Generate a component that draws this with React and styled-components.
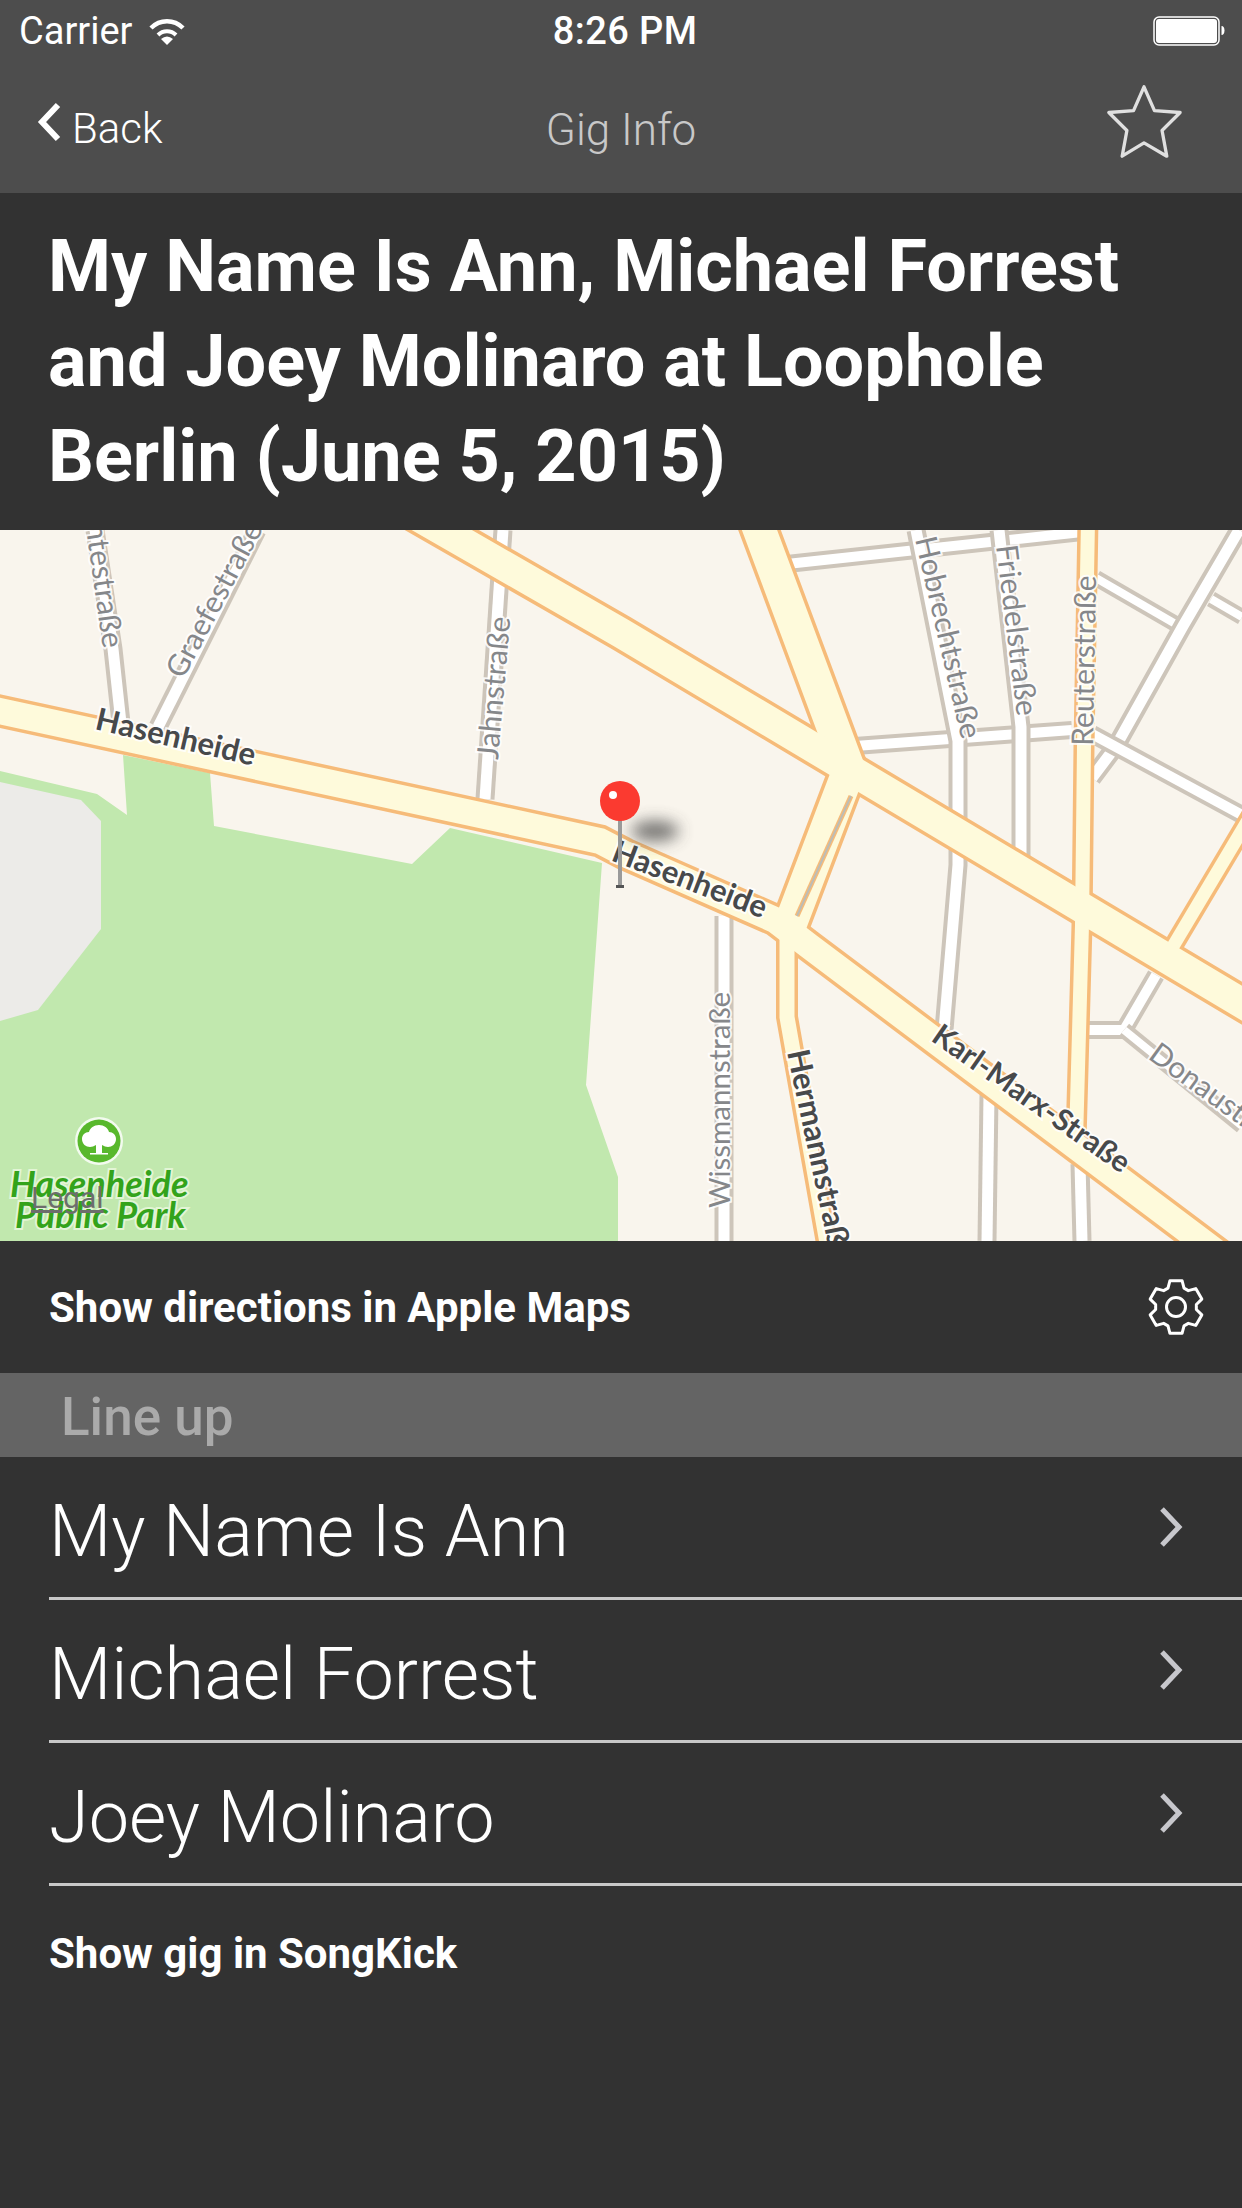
import React from "react";
import styled, { createGlobalStyle } from "styled-components";

const GlobalStyle = createGlobalStyle`
  html, body {
    margin: 0;
    padding: 0;
    background: #323232;
  }
  * {
    box-sizing: border-box;
  }
`;

const Page = styled.div`
  width: 1242px;
  height: 2208px;
  overflow: hidden;
  background: #323232;
  color: #fff;
  font-family: Roboto, "Liberation Sans", sans-serif;
`;

const TopBars = styled.header`
  height: 193px;
  background: #4d4d4d;
`;

const StatusBar = styled.div`
  height: 60px;
  padding: 2px 17px 0 19px;
  display: grid;
  grid-template-columns: 1fr auto 1fr;
  align-items: center;
  font-size: 38px;
`;

const StatusLeft = styled.div`
  display: flex;
  align-items: center;
  gap: 16px;
`;

const Clock = styled.div`
  font-weight: 500;
  letter-spacing: 0.4px;
  margin-left: 6px;
`;

const Battery = styled.div`
  justify-self: end;
  display: flex;
`;

const NavBar = styled.nav`
  height: 133px;
  padding: 0 60px 9px 37px;
  display: grid;
  grid-template-columns: 1fr auto 1fr;
  align-items: center;
`;

const BackLink = styled.div`
  display: flex;
  align-items: center;
  gap: 10px;
  font-size: 42px;
  font-weight: 300;
`;

const BackText = styled.span`
  padding-top: 12px;
`;

const NavTitle = styled.div`
  padding-top: 16px;
  margin-left: 23px;
  font-size: 44px;
  font-weight: 300;
  color: #c8c8c8;
`;

const StarButton = styled.div`
  justify-self: end;
  display: flex;
`;

const GigTitle = styled.h1`
  height: 337px;
  margin: 0;
  padding: 26px 40px 0 48px;
  font-size: 72px;
  line-height: 95px;
  font-weight: 700;
  background: #323232;
`;

const MapFrame = styled.svg`
  display: block;
  width: 1242px;
  height: 711px;
  background: #f9f5ed;
`;

const ActionRow = styled.div`
  height: 132px;
  padding: 0 36px 0 49px;
  display: flex;
  align-items: center;
  justify-content: space-between;
`;

const ActionLabel = styled.span`
  font-size: 42px;
  font-weight: 700;
`;

const SectionHeader = styled.div`
  height: 84px;
  padding: 3px 0 0 61px;
  display: flex;
  align-items: center;
  background: #646464;
  color: #aaaaaa;
  font-size: 53px;
  font-weight: 500;
`;

const ArtistList = styled.ul`
  list-style: none;
  margin: 0;
  padding: 0 0 0 49px;
`;

const ArtistRow = styled.li`
  height: 143px;
  padding: 0 58px 0 0;
  display: flex;
  align-items: center;
  justify-content: space-between;
  border-bottom: 3px solid #c8c8c8;
  font-size: 72px;
  font-weight: 300;
`;

const ArtistName = styled.span`
  padding-top: 8px;
`;

const FooterLink = styled.div`
  padding: 43px 0 0 49px;
  font-size: 42px;
  font-weight: 700;
`;

const CasedRoad = ({ d, w }) => (
  <>
    <path d={d} fill="none" stroke="#cdc5ba" strokeWidth={w + 8} />
    <path d={d} fill="none" stroke="#ffffff" strokeWidth={w} />
  </>
);

const minorRoads = [
  ["M95 530L113 649L121 723", 11],
  ["M257 530L158 727", 11],
  ["M503 530L485 799", 11],
  ["M787 564L1082 532", 10],
  ["M855 746L1072 730", 10],
  ["M916 530L958 741L958 865L944 1030", 11],
  ["M999 530L1021 727L1021 860", 11],
  ["M1096 578L1179 626", 8],
  ["M1092 778L1116 746L1183 626L1239 530", 11],
  ["M1211 599L1242 617", 8],
  ["M1092 734L1242 815", 10],
  ["M1156 975L1124 1030L1086 1030", 10],
  ["M1124 1030L1242 1126", 8],
  ["M724 916L724 1241", 11],
  ["M989 1095L987 1241", 11],
  ["M1080 1164L1082 1241", 11],
];

const mainRoads = [
  ["M1260 800L1172 948", 20],
  ["M1088 520L1084 746L1082 925L1076 1140", 21],
  ["M787 925L787 1017L830 1260", 22],
  ["M755 518L849 770L790 925", 40],
  ["M-10 709L600 841L625 854L775 920L809 946L1260 1285", 33],
  ["M400 506L621 633L1260 1014", 37],
];

const labels = [
  { text: "Hasenheide", x: 94, y: 729, r: 13, size: 31, major: true },
  { text: "Hasenheide", x: 610, y: 860, r: 21, size: 31, major: true },
  { text: "Karl-Marx-Straße", x: 930, y: 1040, r: 35, size: 30, major: true },
  { text: "Hermannstraße", x: 787, y: 1052, r: 78, size: 31, major: true },
  { text: "Wissmannstraße", x: 730, y: 1208, r: -90, size: 29.5 },
  { text: "Jahnstraße", x: 498, y: 760, r: -85, size: 30 },
  { text: "Graefestraße", x: 183, y: 680, r: -62, size: 30 },
  { text: "Fichtestraße", x: 103, y: 649, r: 82, size: 30, end: true },
  { text: "Hobrechtstraße", x: 915, y: 539, r: 77, size: 30 },
  { text: "Friedelstraße", x: 996, y: 546, r: 83, size: 30 },
  { text: "Reuterstraße", x: 1093, y: 746, r: -89, size: 30 },
  { text: "Donaustraße", x: 1147, y: 1058, r: 36, size: 30 },
];

const StreetLabel = styled.text`
  font-family: Lato, "Open Sans", sans-serif;
  font-weight: ${(p) => (p.$major ? 700 : 400)};
  fill: ${(p) => (p.$major ? "#47494b" : "#85878a")};
  stroke: rgba(255, 255, 255, 0.85);
  stroke-width: 4px;
  paint-order: stroke;
`;

const ParkLabel = styled.text`
  font-family: Lato, "Open Sans", sans-serif;
  font-weight: 700;
  font-style: italic;
  font-size: 36px;
  fill: #33a31b;
  stroke: #e3f5d6;
  stroke-width: 4px;
  paint-order: stroke;
`;

const LegalLabel = styled.text`
  font-family: Roboto, sans-serif;
  font-size: 30px;
  fill: #6d6d6d;
  text-decoration: underline;
`;

const Chevron = () => (
  <svg width="26" height="42" viewBox="0 0 26 42">
    <path d="M4 3L21 21L4 39" fill="none" stroke="#c7c7cc" strokeWidth="5" />
  </svg>
);

// six-toothed outline, same gear as the reference's settings glyph
const gearPath = (() => {
  const polar = (r, deg) => {
    const a = (deg * Math.PI) / 180;
    return `${(30 + r * Math.cos(a)).toFixed(2)} ${(30 + r * Math.sin(a)).toFixed(2)}`;
  };
  const points = [];
  for (let i = 0; i < 6; i++) {
    const a = -90 + i * 60;
    points.push(polar(20.5, a - 23), polar(27, a - 13), polar(27, a + 13), polar(20.5, a + 23));
  }
  return `M${points.join("L")}Z`;
})();

const GearIcon = () => (
  <svg width="60" height="60" viewBox="0 0 60 60">
    <path d={gearPath} fill="none" stroke="#fff" strokeWidth="3" strokeLinejoin="round" />
    <circle cx="30" cy="30" r="9.500" fill="none" stroke="#fff" strokeWidth="3" />
  </svg>
);

const artists = ["My Name Is Ann", "Michael Forrest", "Joey Molinaro"];

const GigMap = () => (
  <MapFrame viewBox="0 530 1242 711">
    <defs>
      <filter id="pinShadow" x="-80%" y="-150%" width="260%" height="400%">
        <feGaussianBlur stdDeviation="8" />
      </filter>
    </defs>
    <polygon
      fill="#c1e8ae"
      points="0,771 97,794 127,815 123,755 210,773 214,826 412,864 450,828 602,863 586,1085 618,1177 618,1241 0,1241"
    />
    <polygon fill="#ecebe8" points="0,782 81,800 101,821 101,929 38,1010 0,1021" />
    {minorRoads.map(([d, w]) => (
      <CasedRoad key={d} d={d} w={w} />
    ))}
    {mainRoads.map(([d, w]) => (
      <path key={d} d={d} fill="none" stroke="#f6bb79" strokeWidth={w} />
    ))}
    {mainRoads.map(([d, w]) => (
      <path key={d + "i"} d={d} fill="none" stroke="#fefadb" strokeWidth={w - 7} />
    ))}
    <path d="M851 796L797 916" fill="none" stroke="#f6bb79" strokeWidth="5" />
    <path d="M851 796L797 916" fill="none" stroke="#bdbdb5" strokeWidth="2" />
    {labels.map((l) => (
      <StreetLabel
        key={l.text + l.x}
        $major={l.major}
        x={l.x}
        y={l.y}
        fontSize={l.size}
        textAnchor={l.end ? "end" : "start"}
        transform={`rotate(${l.r} ${l.x} ${l.y})`}
      >
        {l.text}
      </StreetLabel>
    ))}
    <ellipse cx="655" cy="831" rx="24" ry="10" fill="#444" opacity="0.75" filter="url(#pinShadow)" />
    <rect x="618" y="815" width="4" height="73" fill="#9a9a9a" />
    <rect x="616" y="885" width="8" height="3" fill="#555" />
    <circle cx="620" cy="801" r="20" fill="#fb3a30" />
    <circle cx="613" cy="795" r="4" fill="#fff" />
    <circle cx="99" cy="1141" r="24" fill="#fff" opacity="0.8" />
    <circle cx="99" cy="1141" r="21.500" fill="#58b82c" />
    <path
      d="M99 1125c-5 0-9 3-10 7-4 0-7 3-7 7 0 5 4 8 8 8 2 0 4-1 6-2v8h-6v1.500h18V1153h-6v-8c2 1 4 2 6 2 4 0 8-3 8-8 0-4-3-7-7-7-1-4-5-7-10-7z"
      fill="#fff"
    />
    <ParkLabel x="10" y="1197">Hasenheide</ParkLabel>
    <ParkLabel x="15" y="1228">Public Park</ParkLabel>
    <LegalLabel x="31" y="1208">Legal</LegalLabel>
  </MapFrame>
);

export default function App() {
  return (
    <Page>
      <GlobalStyle />
      <TopBars>
        <StatusBar>
          <StatusLeft>
            <span>Carrier</span>
            <svg width="38" height="27" viewBox="0 0 38 27">
              <path d="M3 10C12 1 26 1 35 10" fill="none" stroke="#fff" strokeWidth="4.500" />
              <path d="M10 17C15 12 23 12 28 17" fill="none" stroke="#fff" strokeWidth="4" />
              <path d="M13 21Q19 16 25 21L19 27Z" fill="#fff" />
            </svg>
          </StatusLeft>
          <Clock>8:26 PM</Clock>
          <Battery>
            <svg width="72" height="30" viewBox="0 0 72 30">
              <rect x="1" y="1" width="65" height="28" rx="5" fill="none" stroke="#fff" strokeWidth="1.500" />
              <rect x="3" y="3" width="61" height="24" rx="3" fill="#fff" />
              <path d="M68.500 10c2 0 3 2 3 4.500s-1 4.500-3 4.500z" fill="#fff" />
            </svg>
          </Battery>
        </StatusBar>
        <NavBar>
          <BackLink>
            <svg width="25" height="40" viewBox="0 0 25 40">
              <path d="M21 3L5 20L21 37" fill="none" stroke="#fff" strokeWidth="6" />
            </svg>
            <BackText>Back</BackText>
          </BackLink>
          <NavTitle>Gig Info</NavTitle>
          <StarButton>
            <svg width="76" height="76" viewBox="0 0 80 80">
              <path
                d="M40 3L51 28L78 30L59 49L64 76L40 62L17 76L22 49L3 30L29 28Z"
                fill="none"
                stroke="#e0e0e0"
                strokeWidth="3.500"
                strokeLinejoin="round"
              />
            </svg>
          </StarButton>
        </NavBar>
      </TopBars>
      <GigTitle>
        My Name Is Ann, Michael Forrest and Joey Molinaro at Loophole Berlin (June 5, 2015)
      </GigTitle>
      <GigMap />
      <ActionRow>
        <ActionLabel>Show directions in Apple Maps</ActionLabel>
        <GearIcon />
      </ActionRow>
      <SectionHeader>Line up</SectionHeader>
      <ArtistList>
        {artists.map((name) => (
          <ArtistRow key={name}>
            <ArtistName>{name}</ArtistName>
            <Chevron />
          </ArtistRow>
        ))}
      </ArtistList>
      <FooterLink>Show gig in SongKick</FooterLink>
    </Page>
  );
}
